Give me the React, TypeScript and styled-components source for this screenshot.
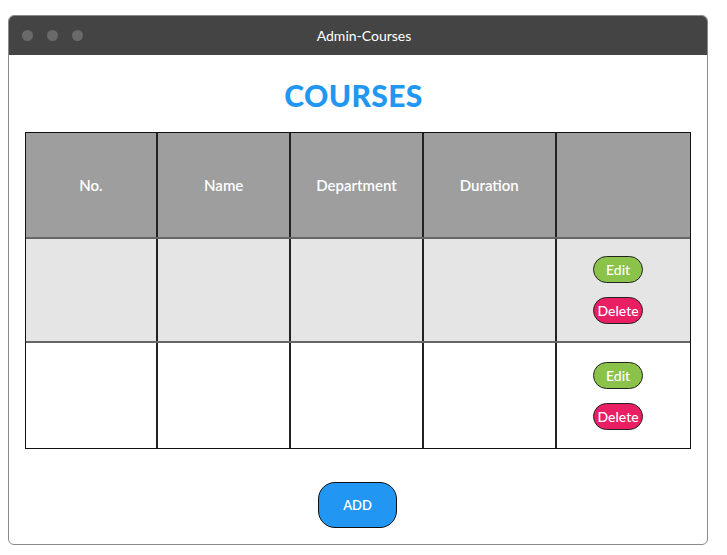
import React from "react";
import styled, { createGlobalStyle } from "styled-components";

const Global = createGlobalStyle`
  html, body { margin: 0; padding: 0; background: #ffffff; }
  body { font-family: Lato, "Open Sans", sans-serif; }
`;

const Page = styled.div`
  padding: 15px 0 0 8px;
`;

const Window = styled.div`
  width: 700px;
  height: 530px;
  box-sizing: border-box;
  border: 1.5px solid #8a8a8a;
  border-radius: 6px;
  overflow: hidden;
  display: flex;
  flex-direction: column;
  background: #fff;
`;

const TitleBar = styled.div`
  height: 39px;
  background: #444444;
  display: flex;
  align-items: center;
  position: relative;
  padding-left: 13px;
  gap: 14px;
`;

const Dot = styled.span`
  width: 11px;
  height: 11px;
  border-radius: 50%;
  background: #6a6a6a;
`;

const TitleText = styled.div`
  position: absolute;
  left: 12px;
  right: 0;
  text-align: center;
  color: #fff;
  font-size: 14px;
  pointer-events: none;
`;

const Content = styled.div`
  flex: 1;
  display: flex;
  flex-direction: column;
  align-items: center;
  padding: 20px 16px 0 15px;
`;

const Heading = styled.h1`
  margin: 0;
  padding-right: 8px;
  height: 40px;
  line-height: 40px;
  font-size: 30px;
  font-weight: 900;
  color: #2196f3;
  letter-spacing: 0.4px;
`;

const Table = styled.div`
  margin-top: 17px;
  width: 666px;
  box-sizing: border-box;
  border: 1.5px solid #111;
  display: flex;
  flex-direction: column;
`;

const Row = styled.div<{ $bg: string; $first?: boolean; $h: number }>`
  display: grid;
  grid-template-columns: repeat(5, 1fr);
  height: ${(p) => p.$h}px;
  background: ${(p) => p.$bg};
  border-top: ${(p) => (p.$first ? "none" : "2px solid #666")};
`;

const Cell = styled.div<{ $last?: boolean }>`
  display: flex;
  flex-direction: column;
  align-items: center;
  justify-content: center;
  gap: 14px;
  border-right: ${(p) => (p.$last ? "none" : "2px solid #222")};
  color: #fff;
  font-size: 15px;
  font-weight: 600;
`;

const Pill = styled.button<{ $bg: string }>`
  width: 50px;
  height: 27px;
  border-radius: 14px;
  border: 1px solid #222;
  background: ${(p) => p.$bg};
  color: #fff;
  font-family: Lato, "Open Sans", sans-serif;
  font-size: 14px;
  font-weight: 500;
  padding: 0;
  transform: translateX(-5px);
`;

const AddButton = styled.button`
  margin-top: 33px;
  width: 79px;
  height: 46px;
  border-radius: 17px;
  border: 1px solid #111;
  background: #2196f3;
  color: #fff;
  font-family: Lato, "Open Sans", sans-serif;
  font-size: 13px;
  font-weight: 600;
  padding: 0;
`;

const headers = ["No.", "Name", "Department", "Duration", ""];

function DataRow({ bg, h }: { bg: string; h: number }) {
  return (
    <Row $bg={bg} $h={h}>
      <Cell />
      <Cell />
      <Cell />
      <Cell />
      <Cell $last>
        <Pill $bg="#8bc34a">Edit</Pill>
        <Pill $bg="#e91e63">Delete</Pill>
      </Cell>
    </Row>
  );
}

export default function App() {
  return (
    <>
      <Global />
      <Page>
        <Window>
          <TitleBar>
            <Dot />
            <Dot />
            <Dot />
            <TitleText>Admin-Courses</TitleText>
          </TitleBar>
          <Content>
            <Heading>COURSES</Heading>
            <Table>
              <Row $bg="#9e9e9e" $first $h={104}>
                {headers.map((h, i) => (
                  <Cell key={i} $last={i === 4}>
                    {h}
                  </Cell>
                ))}
              </Row>
              <DataRow bg="#e5e5e5" h={102} />
              <DataRow bg="#ffffff" h={105} />
            </Table>
            <AddButton>ADD</AddButton>
          </Content>
        </Window>
      </Page>
    </>
  );
}
